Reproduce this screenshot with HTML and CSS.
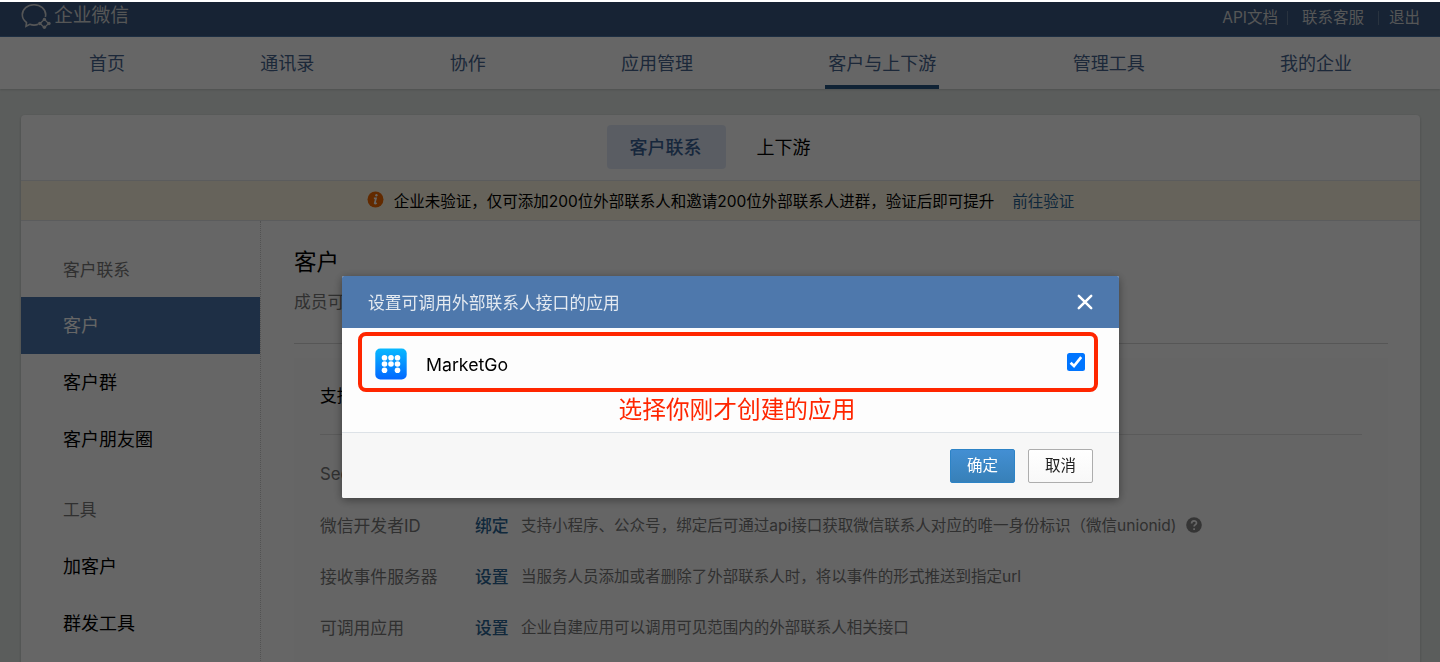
FILE: index.html
```html
<!DOCTYPE html>
<html lang="zh-CN">
<head>
<meta charset="utf-8">
<title>企业微信</title>
<link rel="stylesheet" href="styles.css">
</head>
<body>
<div class="page">
  <header class="topbar">
    <div class="brand">
      <svg class="brand-icon" width="30" height="27" viewBox="0 0 30 27" fill="none" stroke="currentColor" stroke-width="1.6">
        <path d="M17.300 22.300C14.500 23.400 11 23.200 8.800 22.300L5 24.300L5.500 20.500C3 18.700 1.300 15.900 1.300 12.800C1.300 7.100 6.500 2.700 13 2.700S24.700 7.100 24.700 12.800C24.700 13.500 24.600 14.200 24.300 15"/>
        <path d="M23.400 17.400L27.600 21.500L23.400 25.700L19.100 21.500Z" stroke-width="1.300"/>
        <g fill="currentColor" stroke="none"><circle cx="23.400" cy="17.400" r="1.700"/><circle cx="28" cy="21.500" r="1.700"/><circle cx="23.400" cy="25.300" r="1.700"/><circle cx="18.800" cy="21.500" r="1.700"/></g>
      </svg>
      <span class="brand-name">企业微信</span>
    </div>
    <div class="links"><a>API文档</a><i class="sep"></i><a>联系客服</a><i class="sep sep-last"></i><a>退出</a></div>
  </header>
  <nav class="nav">
    <a>首页</a><a>通讯录</a><a>协作</a><a>应用管理</a><a class="nav-on">客户与上下游</a><a>管理工具</a><a>我的企业</a>
  </nav>
  <main class="card">
    <div class="tabs"><a class="tab tab-on">客户联系</a><a class="tab">上下游</a></div>
    <div class="notice">
      <svg class="info" width="17" height="17" viewBox="0 0 17 17"><circle cx="8.500" cy="8.500" r="8" fill="#f56a00"/><path d="M9.300 4.300L9.500 4.200" fill="none" stroke="#fff" stroke-width="2.400" stroke-linecap="round"/><path d="M6.900 7.400H9L7.700 12.300Q8.200 13 9.700 12" fill="none" stroke="#fff" stroke-width="1.700"/></svg>
      <span>企业未验证，仅可添加200位外部联系人和邀请200位外部联系人进群，验证后即可提升</span>
      <a class="verify">前往验证</a>
    </div>
    <div class="columns">
      <aside class="side">
        <div class="side-title">客户联系</div>
        <a class="side-item side-on">客户</a>
        <a class="side-item">客户群</a>
        <a class="side-item">客户朋友圈</a>
        <div class="side-title side-title-tools">工具</div>
        <a class="side-item">加客户</a>
        <a class="side-item">群发工具</a>
      </aside>
      <section class="content">
        <h1 class="title">客户</h1>
        <p class="lead">成员可</p>
        <div class="panel">
          <h2 class="panel-title">支持</h2>
          <div class="row"><span class="label">Sec</span></div>
          <div class="row"><span class="label">微信开发者ID</span><a class="action">绑定</a><span class="desc">支持小程序、公众号，绑定后可通过api接口获取微信联系人对应的唯一身份标识（微信unionid)</span>
            <svg class="help" width="16" height="16" viewBox="0 0 16 16"><circle cx="8" cy="8" r="7.800" fill="#868686"/><path d="M5.600 6.400c0-3.300 4.900-3.200 4.900-.4 0 1.600-2.400 1.700-2.400 3.500M8.100 11.300v1.600" fill="none" stroke="#fff" stroke-width="1.700"/></svg>
          </div>
          <div class="row"><span class="label">接收事件服务器</span><a class="action">设置</a><span class="desc">当服务人员添加或者删除了外部联系人时，将以事件的形式推送到指定url</span></div>
          <div class="row"><span class="label">可调用应用</span><a class="action">设置</a><span class="desc">企业自建应用可以调用可见范围内的外部联系人相关接口</span></div>
        </div>
      </section>
    </div>
  </main>
</div>
<div class="mask"></div>
<div class="dialog">
  <div class="dialog-head">
    <span>设置可调用外部联系人接口的应用</span>
    <svg width="16" height="16" viewBox="0 0 16 16" stroke="#fff" stroke-width="2.500" stroke-linecap="round"><path d="M1.800 1.800L14.200 14.200M14.200 1.800L1.800 14.200"/></svg>
  </div>
  <div class="dialog-body">
    <div class="app">
      <svg class="app-icon" width="32" height="32" viewBox="0 0 32 32">
        <defs><linearGradient id="sky" x1="0" y1="0" x2="0" y2="1"><stop offset="0" stop-color="#08b9ff"/><stop offset="1" stop-color="#0267ff"/></linearGradient></defs>
        <rect x=".3" y=".5" width="31.400" height="31" rx="5" fill="url(#sky)"/>
        <g fill="#fff"><circle cx="9.500" cy="9.700" r="2.800"/><circle cx="16" cy="9.700" r="2.800"/><circle cx="22.500" cy="9.700" r="2.800"/><circle cx="9.500" cy="16" r="2.800"/><circle cx="16" cy="16" r="2.800"/><circle cx="22.500" cy="16" r="2.800"/><circle cx="9.500" cy="22.300" r="2.800"/><circle cx="22.500" cy="22.300" r="2.800"/></g>
      </svg>
      <span class="app-name">MarketGo</span>
      <svg class="check" width="18" height="18" viewBox="0 0 18 18"><rect width="18" height="18" rx="2.500" fill="#0075ff"/><path d="M3.600 9.700L7 13L14.200 4.200" fill="none" stroke="#fff" stroke-width="2.700"/></svg>
    </div>
    <div class="hint">选择你刚才创建的应用</div>
  </div>
  <div class="dialog-foot"><button class="btn btn-ok">确定</button><button class="btn">取消</button></div>
</div>
</body>
</html>
```
FILE: styles.css
```css
* { box-sizing: border-box; }
body {
  margin: 0;
  height: 662px;
  overflow: hidden;
  font-family: Inter, "Noto Sans CJK SC", sans-serif;
  color: #000;
}
.page {
  height: 662px;
  overflow: hidden;
  background: #e4e9e6;
  border-top: 2px solid #fff;
}
.topbar {
  display: flex;
  justify-content: space-between;
  height: 35px;
  padding: 0 20px 0 21px;
  background: #3a5882;
  border-bottom: 1px solid #4b75a8;
  color: #d4d6d8;
}
.brand { display: flex; gap: 3px; height: 28px; }
.brand-icon { flex: none; }
.brand-name { font-size: 18.800px; line-height: 27px; }
.links { display: flex; font-size: 15.500px; line-height: 31px; }
.sep { width: 1px; height: 14px; margin: 9px 14px 0 9px; background: #66809f; }
.sep-last { margin: 9px 10px 0 14px; }
.nav {
  display: flex;
  justify-content: space-between;
  height: 52px;
  padding: 0 88px 0 89px;
  background: #fff;
  box-shadow: 0 1px 2px rgba(0, 0, 0, .15);
  font-size: 18px;
  line-height: 54px;
  color: #46658f;
}
.nav-on { height: 52px; margin: 0 -2px 0 -3px; padding: 0 3px; border-bottom: 4px solid #285784; }
.card {
  width: 1399px;
  height: 560px;
  margin: 26px 0 0 21px;
  background: #fff;
  border-radius: 4px 4px 0 0;
  box-shadow: 0 1px 3px rgba(0, 0, 0, .2);
}
.tabs {
  display: flex;
  align-items: center;
  justify-content: center;
  gap: 8px;
  height: 65px;
  padding: 0 0 2px;
  font-size: 18px;
}
.tab { height: 44px; padding: 0 23px; line-height: 46px; border-radius: 4px; }
.tab-on { margin-left: -1px; padding-right: 24px; background: #e2e9f8; color: #3b6397; font-weight: 500; }
.notice {
  display: flex;
  align-items: center;
  justify-content: center;
  height: 41px;
  padding-bottom: 2px;
  background: #fff8e3;
  border: solid #e4e6e9;
  border-width: 1px 0;
  font-size: 15.500px;
}
.info { margin-right: 10px; }
.verify { margin-left: 18px; color: #2b6595; }
.columns { display: flex; height: 454px; }
.side { flex: none; width: 240px; border-right: 1px dotted #ccc; font-size: 18px; }
.side-title { padding: 21px 0 0 42px; height: 76px; font-size: 16.800px; line-height: 57px; color: #787878; }
.side-title-tools { height: 70px; padding-top: 14px; }
.side-item { display: block; width: 239px; height: 57px; padding-left: 42px; line-height: 58px; }
.side-on { background: #4b77ac; color: #fff; }
.content { flex: none; width: 1159px; padding: 24px 32px 0 33px; }
.title { margin: 0; font-size: 22.500px; font-weight: 400; line-height: 33px; }
.lead { height: 66px; margin: 0; font-size: 16.800px; line-height: 49px; color: #787878; border-bottom: 1px solid #d8d8d8; }
.panel { height: 320px; margin-top: 14px; padding: 0 26px; background: #fcfcfc; }
.panel-title { height: 77px; margin: 0 0 13px; font-size: 16.800px; font-weight: 400; line-height: 76px; border-bottom: 1px solid #e0e0e0; }
.row { display: flex; align-items: center; height: 51px; white-space: nowrap; }
.label { width: 155px; font-size: 16.800px; color: #787878; }
.action { width: 47px; font-size: 16.800px; font-weight: 500; color: #2b6595; }
.desc { margin-left: -1px; padding-bottom: 1px; font-size: 15.520px; color: #787878; }
.help { margin-left: 9px; }
.mask { position: fixed; inset: 2px 0 0; background: rgba(0, 0, 0, .6); }
.dialog {
  position: fixed;
  left: 342px;
  top: 276px;
  width: 777px;
  height: 222px;
  overflow: hidden;
  border-radius: 2px;
  background: #fdfdfd;
  box-shadow: 0 2px 10px rgba(0, 0, 0, .4);
}
.dialog-head {
  display: flex;
  align-items: center;
  justify-content: space-between;
  height: 52px;
  padding: 0 26px;
  background: #4e78ac;
  color: #e4eaf1;
  font-size: 16.800px;
}
.dialog-body { height: 105px; padding: 4px 21px 0 16px; border-bottom: 1px solid #dde2e7; }
.app { display: flex; align-items: center; height: 60px; padding: 4px 9px 0 13px; border: 4px solid #ff2600; border-radius: 8px; }
.app-name { margin-left: 19px; font-size: 17.700px; }
.check { margin: 0 0 5px auto; }
.hint { padding-left: 18px; font-size: 23.700px; line-height: 35px; text-align: center; color: #ff2600; }
.dialog-foot { display: flex; justify-content: flex-end; gap: 13px; height: 65px; padding: 16px 26px 0; background: #f7f7f7; }
.btn {
  width: 65px;
  height: 34px;
  padding: 0;
  border: 1px solid #adadad;
  border-radius: 2px;
  background: linear-gradient(#fff, #f8f8f8);
  font: 15.500px/32px Inter, "Noto Sans CJK SC", sans-serif;
  color: #222;
}
.btn-ok { border-color: #2d83c6; background: linear-gradient(#438fd3, #3780b8); color: #fff; }
```
